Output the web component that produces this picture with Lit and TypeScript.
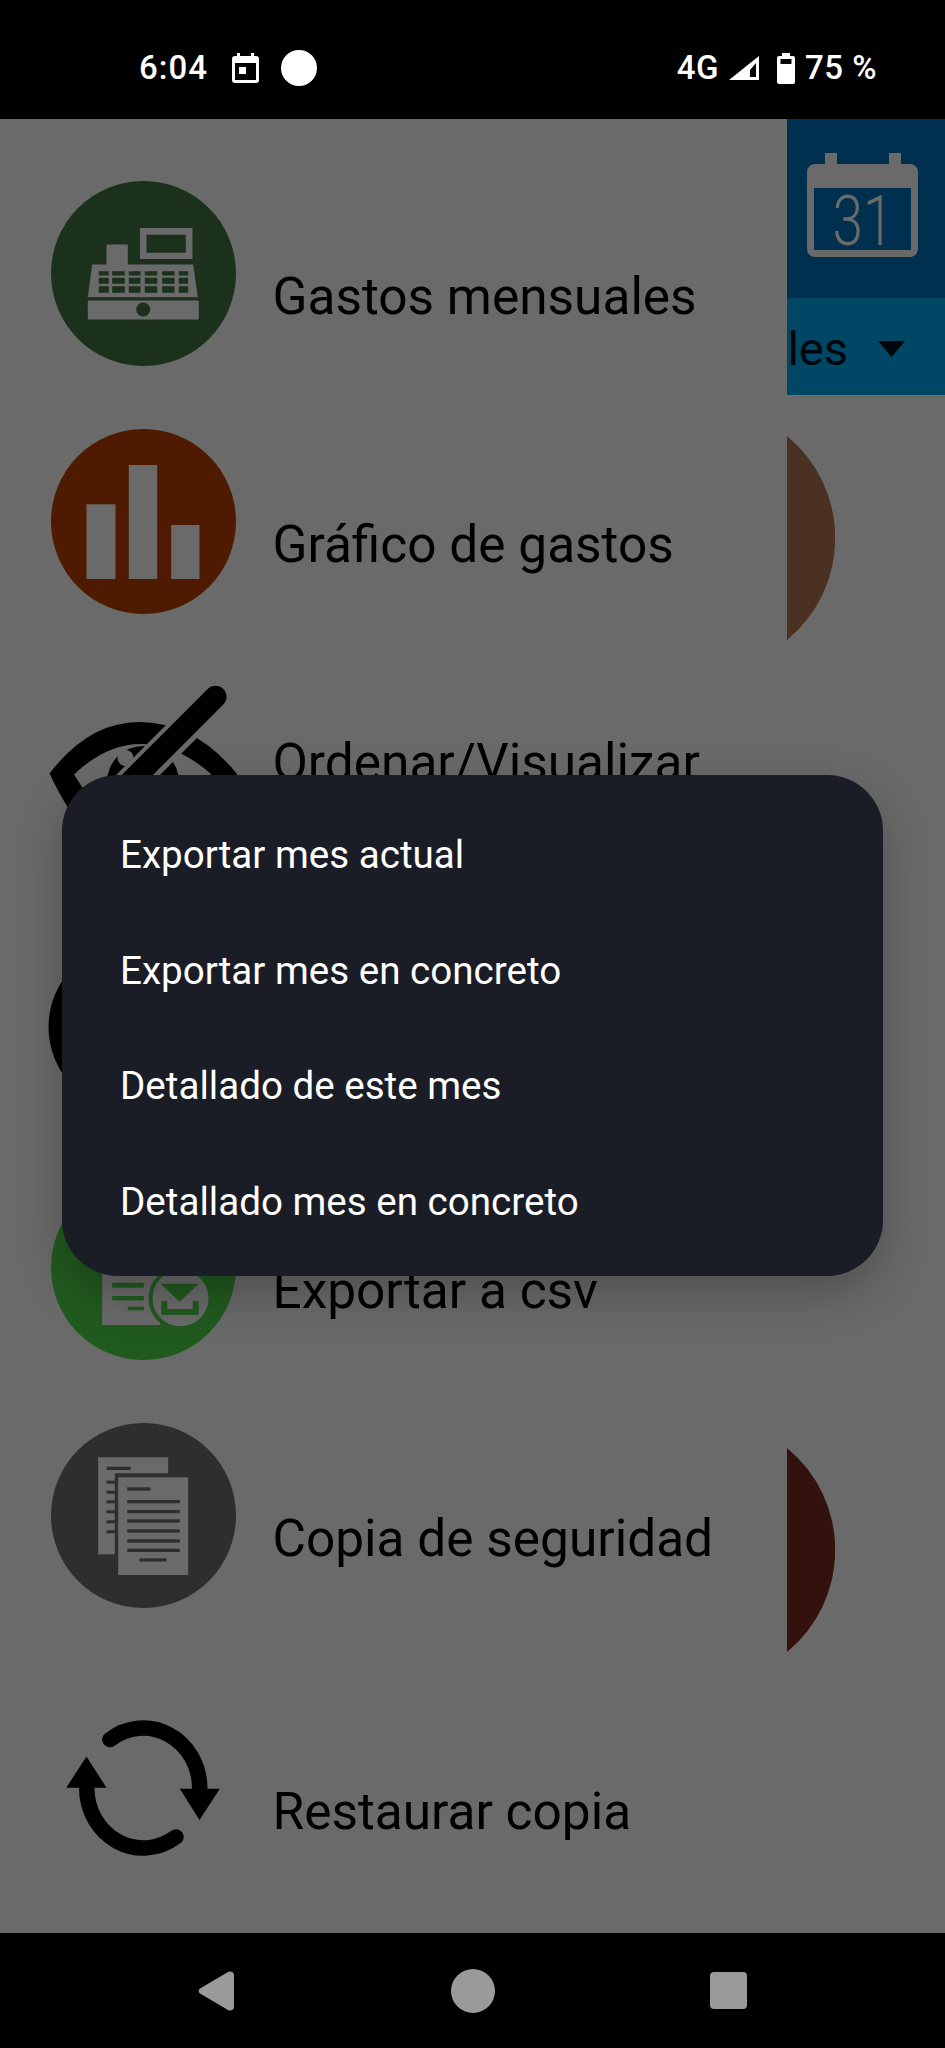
import {LitElement, html, css, svg} from 'lit';
import {customElement} from 'lit/decorators.js';

const GRAY = '#6a6a6a';

const bars = (x: number[], y: number, h: number, w: number[], fill: string) =>
  x.map((v, i) => svg`<rect x="${v}" y="${y}" width="${w[i]}" height="${h}" fill="${fill}"/>`);

const registerIcon = svg`
  <circle cx="92.5" cy="92.5" r="92.5" fill="#1c311c"/>
  <path fill="${GRAY}" fill-rule="evenodd" d="M89 47h52.500v31H89zM95.500 53.800v18h39.300v-18z"/>
  <rect x="55.500" y="63.500" width="21.300" height="21" fill="${GRAY}"/>
  <path fill="${GRAY}" d="M41.200 83.500h101l4.600 32.700H36.800z"/>
  ${[[90.2, 4.3], [96.8, 6], [105.2, 6.600]].map(([y, h]) =>
    bars([47.8, 61.2, 77.8, 93.8, 111.2, 127.8], y, h, [10, 12.6, 11.7, 12.4, 12.3, 9.4], '#1c311c'))}
  <rect x="36.800" y="119.500" width="111" height="19" rx="1.500" fill="${GRAY}"/>
  <circle cx="92.200" cy="128.500" r="7" fill="#1c311c"/>`;

const chartIcon = svg`
  <circle cx="92.5" cy="92.5" r="92.5" fill="#4f1b00"/>
  <rect x="35.500" y="75.300" width="29" height="74.700" fill="${GRAY}"/>
  <rect x="77.800" y="36" width="28.400" height="114" fill="${GRAY}"/>
  <rect x="120.200" y="96" width="28.300" height="54" fill="${GRAY}"/>`;

const eyeIcon = svg`
  <path d="M-1.500 95.500Q38 44 88 44q56 0 98 52L186 120Q140 180 88 180Q38 180 -1.500 95.500Z" fill="#000"/>
  <path d="M23 96.500Q55 66 90 66q36 0 70 30Q125 150 90 150Q55 150 23 96.500Z" fill="${GRAY}"/>
  <circle cx="92" cy="104" r="36" fill="#000"/>
  <circle cx="74.500" cy="80" r="8" fill="${GRAY}"/>
  <line x1="176" y1="8" x2="30" y2="154" stroke="${GRAY}" stroke-width="31"/>
  <line x1="164.500" y1="18.800" x2="40" y2="143.300" stroke="#000" stroke-width="22" stroke-linecap="round"/>`;

const blackDisc = svg`<circle cx="81.500" cy="101" r="84" fill="#000"/>`;

const csvIcon = svg`
  <circle cx="92.5" cy="92.5" r="92.5" fill="#215a1f"/>
  <rect x="51.200" y="85" width="58" height="65" fill="${GRAY}"/>
  <g fill="#215a1f">
    <rect x="61.200" y="107.700" width="31.600" height="5"/>
    <rect x="61.200" y="121" width="31.600" height="4.300"/>
    <rect x="76.800" y="131.700" width="16" height="3.600"/>
  </g>
  <circle cx="129.500" cy="123.300" r="30" fill="${GRAY}" stroke="#215a1f" stroke-width="4"/>
  <path fill="#215a1f" d="M109.500 108.700h38.300l-19 18zM110.200 126h6v8h25.600v-8h6v14h-37.600z"/>`;

const backupIcon = svg`
  <circle cx="92.5" cy="92.5" r="92.5" fill="#2e2e2e"/>
  <rect x="47.200" y="34.300" width="70" height="97" fill="${GRAY}"/>
  <rect x="55.500" y="43.700" width="24" height="3.300" fill="#2e2e2e"/>
  ${[57.7, 67.7, 77.3, 87.3, 97.3, 107.3].map(y =>
    svg`<rect x="55.500" y="${y}" width="10" height="3" fill="#2e2e2e"/>`)}
  <rect x="63.800" y="50.300" width="73.400" height="101.700" fill="#2e2e2e"/>
  <rect x="67.200" y="54.300" width="70" height="97.700" fill="${GRAY}"/>
  <rect x="76.200" y="64.300" width="23.300" height="3.400" fill="#2e2e2e"/>
  ${[77, 87, 96.3, 106.3, 116.3, 125.700].map(y =>
    svg`<rect x="76.200" y="${y}" width="52.600" height="3.300" fill="#2e2e2e"/>`)}
  <rect x="88.500" y="135.300" width="27" height="3.300" fill="#2e2e2e"/>`;

const restoreIcon = svg`
  <g fill="none" stroke="#000" stroke-width="15.500" stroke-linecap="round">
    <path d="M58.900 44.600A56.500 60 0 0 1 148.700 93"/>
    <path d="M124.950 141.900A56.500 60 0 0 1 35.700 93"/>
  </g>
  <path d="M128.800 93.800h40L148.500 125zM15.200 92.800h40.300L35.500 61.500z" fill="#000"/>`;

const ROWS = [
  {label: 'Gastos mensuales', icon: registerIcon},
  {label: 'Gráfico de gastos', icon: chartIcon},
  {label: 'Ordenar/Visualizar', icon: eyeIcon, raised: true},
  {label: '', icon: blackDisc},
  {label: 'Exportar a csv', icon: csvIcon},
  {label: 'Copia de seguridad', icon: backupIcon},
  {label: 'Restaurar copia', icon: restoreIcon},
];

const MENU = [
  'Exportar mes actual',
  'Exportar mes en concreto',
  'Detallado de este mes',
  'Detallado mes en concreto',
];

@customElement('app-root')
export class AppRoot extends LitElement {
  static styles = css`
    :host {
      display: flex;
      flex-direction: column;
      position: relative;
      width: 945px;
      height: 2048px;
      overflow: hidden;
      background: #000;
      font-family: Roboto, "Liberation Sans", sans-serif;
    }

    .status {
      flex: none;
      height: 119px;
      padding: 17px 68px 0 139px;
      box-sizing: border-box;
      display: flex;
      align-items: center;
      color: #fff;
      font-size: 33px;
      font-weight: 500;
      line-height: 36px;
      letter-spacing: 0.5px;
    }

    .status svg {
      display: block;
      flex: none;
    }

    .time {
      width: 69px;
      letter-spacing: 1px;
      white-space: nowrap;
    }

    .cal-small {
      margin-left: 24px;
    }

    .dot {
      width: 36px;
      height: 36px;
      margin-left: 22px;
      border-radius: 50%;
      background: #fff;
    }

    .spacer {
      flex: 1;
    }

    .signal {
      margin-left: 10px;
    }

    .battery {
      margin: 0 10px 0 18px;
    }

    .main {
      flex: 1;
      display: flex;
      background: #6a6a6a;
      overflow: hidden;
    }

    .drawer {
      flex: none;
      width: 787px;
      padding-top: 30px;
      box-sizing: border-box;
    }

    .row {
      height: 248.5px;
      display: flex;
      align-items: center;
      color: #000;
    }

    .row:last-child {
      margin-top: 23px;
    }

    .row svg {
      flex: none;
      margin: 0 37px 0 50.5px;
      overflow: visible;
    }

    .row span {
      margin-top: 47px;
      font-size: 51.4px;
      line-height: 60px;
    }

    .row span.raised {
      margin-top: -14px;
    }

    .row:last-child span {
      margin-top: 50px;
    }

    .behind {
      flex: 1;
      min-width: 0;
      overflow: hidden;
    }

    .app-header {
      height: 179px;
      padding: 34px 0 0 20px;
      box-sizing: border-box;
      background: #00304f;
    }

    .app-header svg {
      display: block;
    }

    .sub-bar {
      height: 96.5px;
      display: flex;
      align-items: center;
      justify-content: flex-end;
      padding: 5px 40px 0 0;
      box-sizing: border-box;
      background: #004766;
      color: #00060c;
      font-size: 47px;
    }

    .sub-bar svg {
      flex: none;
      margin-left: 30px;
    }

    .half {
      display: block;
    }

    .half.first {
      margin-top: 41.5px;
    }

    .half.second {
      margin-top: 808px;
    }

    .nav {
      flex: none;
      height: 115px;
      display: flex;
      align-items: center;
      justify-content: space-between;
      padding: 0 198px;
      box-sizing: border-box;
    }

    .nav svg {
      display: block;
    }

    .home {
      width: 44px;
      height: 44px;
      margin-left: 2px;
      border-radius: 50%;
      background: #9a9a9a;
    }

    .recent {
      width: 37px;
      height: 37px;
      border-radius: 4px;
      background: #9a9a9a;
    }

    .menu {
      position: absolute;
      left: 62px;
      top: 775px;
      width: 821px;
      height: 501px;
      padding: 22px 0 0;
      box-sizing: border-box;
      border-radius: 56px;
      background: #1a1c26;
      box-shadow: 0 18px 48px rgba(0, 0, 0, 0.25);
      color: #fff;
      font-size: 38.6px;
    }

    .item {
      height: 115.5px;
      display: flex;
      align-items: center;
      padding-left: 58px;
    }
  `;

  render() {
    return html`
      <div class="status">
        <span class="time">6:04</span>
        <svg class="cal-small" width="27" height="30" viewBox="0 0 27 30">
          <path fill="#fff" fill-rule="evenodd" d="M5 0h3v3h11V0h3v3h2a3 3 0 0 1 3 3v21a3 3 0 0 1-3 3H3a3 3 0 0 1-3-3V6a3 3 0 0 1 3-3h2zM3 10v17h21V10zM7 14h7v7H7z"/>
        </svg>
        <div class="dot"></div>
        <div class="spacer"></div>
        <span>4G</span>
        <svg class="signal" width="30" height="24" viewBox="0 0 30 24">
          <path fill="#fff" fill-rule="evenodd" d="M30 0v24H0zM27 7 21 14v7h6z"/>
        </svg>
        <svg class="battery" width="18" height="31" viewBox="0 0 18 31">
          <path fill="#fff" fill-rule="evenodd" d="M5 0h8v3h3a2 2 0 0 1 2 2v24a2 2 0 0 1-2 2H2a2 2 0 0 1-2-2V5a2 2 0 0 1 2-2h3zM3.500 6v5h11V6z"/>
        </svg>
        <span>75 %</span>
      </div>

      <div class="main">
        <div class="drawer">
          ${ROWS.map(row => html`
            <div class="row">
              <svg width="185" height="185" viewBox="0 0 185 185">${row.icon}</svg>
              ${row.label ? html`<span class="${row.raised ? 'raised' : ''}">${row.label}</span>` : ''}
            </div>
          `)}
        </div>
        <div class="behind">
          <div class="app-header">
            <svg width="111" height="104" viewBox="0 0 111 104">
              <path fill="${GRAY}" fill-rule="evenodd" d="M18 0h12v11h52V0h12v11h9a8 8 0 0 1 8 8v77a8 8 0 0 1-8 8H8a8 8 0 0 1-8-8V19a8 8 0 0 1 8-8h10zM7 35v62h97V35z"/>
              <text x="56" y="91.500" text-anchor="middle" fill="${GRAY}" font-family="Roboto" font-weight="300" font-size="70" textLength="61" lengthAdjust="spacingAndGlyphs">31</text>
            </svg>
          </div>
          <div class="sub-bar">
            <span>les</span>
            <svg width="27" height="16" viewBox="0 0 27 16"><path d="M0 0h27L13.500 16z" fill="#00060c"/></svg>
          </div>
          <svg class="half first" width="48" height="204" viewBox="0 0 48 204">
            <path d="M0 0A132 132 0 0 1 0 204Z" fill="#4b3122"/>
          </svg>
          <svg class="half second" width="48" height="204" viewBox="0 0 48 204">
            <path d="M0 0A132 132 0 0 1 0 204Z" fill="#33120e"/>
          </svg>
        </div>
      </div>

      <div class="nav">
        <svg width="36" height="40" viewBox="0 0 36 40">
          <path fill="#9a9a9a" d="M32 0.500a4 4 0 0 1 4 3.500v32a4 4 0 0 1-4 3.500q-1 0-2-0.500L2 22.500a3 3 0 0 1 0-5L30 1q1-0.500 2-0.500z"/>
        </svg>
        <div class="home"></div>
        <div class="recent"></div>
      </div>

      <div class="menu">
        ${MENU.map(item => html`<div class="item">${item}</div>`)}
      </div>
    `;
  }
}
